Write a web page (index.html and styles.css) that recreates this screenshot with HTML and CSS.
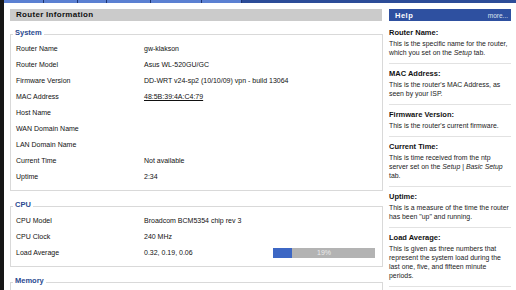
FILE: index.html
```html
<!DOCTYPE html>
<html lang="en">
<head>
    <meta charset="UTF-8">
    <title>Router Information</title>
    <link rel="stylesheet" href="styles.css">
</head>
<body>
    <div class="page">
        <div class="tabs">
            <span class="tab"></span>
            <span class="tab"></span>
            <span class="tab"></span>
            <span class="tab"></span>
            <span class="tab"></span>
            <span class="tab"></span>
        </div>

        <div class="layout">
            <div class="main">
                <h2 class="title-bar">Router Information</h2>

                <fieldset>
                    <legend>System</legend>
                    <div class="row"><span>Router Name</span><span>gw-klakson</span></div>
                    <div class="row"><span>Router Model</span><span>Asus WL-520GU/GC</span></div>
                    <div class="row"><span>Firmware Version</span><span>DD-WRT v24-sp2 (10/10/09) vpn - build 13064</span></div>
                    <div class="row"><span>MAC Address</span><span class="mac">48:5B:39:4A:C4:79</span></div>
                    <div class="row"><span>Host Name</span><span></span></div>
                    <div class="row"><span>WAN Domain Name</span><span></span></div>
                    <div class="row"><span>LAN Domain Name</span><span></span></div>
                    <div class="row"><span>Current Time</span><span>Not available</span></div>
                    <div class="row"><span>Uptime</span><span>2:34</span></div>
                </fieldset>

                <fieldset>
                    <legend>CPU</legend>
                    <div class="row"><span>CPU Model</span><span>Broadcom BCM5354 chip rev 3</span></div>
                    <div class="row"><span>CPU Clock</span><span>240 MHz</span></div>
                    <div class="row">
                        <span>Load Average</span>
                        <span class="load">
                            <span class="load-num">0.32, 0.19, 0.06</span>
                            <span class="meter">
                                <span class="meter-fill" style="width: 19%"></span>
                                <span class="meter-text">19%</span>
                            </span>
                        </span>
                    </div>
                </fieldset>

                <fieldset>
                    <legend>Memory</legend>
                    <div class="row"><span>Total Available</span><span>13.6 MB / 16.0 MB</span></div>
                    <div class="row"><span>Free</span><span>3.5 MB / 13.6 MB</span></div>
                </fieldset>
            </div>

            <div class="help">
                <div class="help-bar">
                    <b>Help</b>
                    <a href="#" class="more">more...</a>
                </div>

                <div class="help-item">
                    <h4>Router Name:</h4>
                    <p>This is the specific name for the router, which you set on the <em>Setup</em> tab.</p>
                </div>
                <div class="help-item">
                    <h4>MAC Address:</h4>
                    <p>This is the router's MAC Address, as seen by your ISP.</p>
                </div>
                <div class="help-item">
                    <h4>Firmware Version:</h4>
                    <p>This is the router's current firmware.</p>
                </div>
                <div class="help-item">
                    <h4>Current Time:</h4>
                    <p>This is time received from the ntp server set on the <em>Setup</em> | <em>Basic Setup</em> tab.</p>
                </div>
                <div class="help-item">
                    <h4>Uptime:</h4>
                    <p>This is a measure of the time the router has been "up" and running.</p>
                </div>
                <div class="help-item">
                    <h4>Load Average:</h4>
                    <p>This is given as three numbers that represent the system load during the last one, five, and fifteen minute periods.</p>
                </div>
            </div>
        </div>
    </div>
</body>
</html>
```

FILE: styles.css
```css
html, body {
    margin: 0;
    padding: 0;
    overflow: hidden;
    background-color: #fff;
    font-family: "Liberation Sans", Arial, sans-serif;
    color: #111;
}

.page {
    height: 290px;
    overflow: hidden;
    border-left: 4px solid #161616;
}

/* Reste der Menüleiste oben */
.tabs {
    display: flex;
    height: 3px;
    background-color: #2c4c98;
}

.tab {
    background-color: #5b80d2;
    border-right: 1px solid #1d3470;
}

.tab:nth-child(1) { width: 39px; }
.tab:nth-child(2) { width: 33px; }
.tab:nth-child(3) { width: 28px; }
.tab:nth-child(4) { width: 43px; }
.tab:nth-child(5) { width: 50px; }
.tab:nth-child(6) { width: 39px; }

.layout {
    display: flex;
    gap: 6px;
    padding: 6px 0 0 6px;
}

.main {
    width: 373px;
}

.title-bar {
    margin: 0 1px 0 0;
    height: 12px;
    line-height: 12px;
    padding-left: 6px;
    background-color: #cbcbcb;
    font-size: 8px;
    font-weight: bold;
    letter-spacing: 0.3px;
}

fieldset {
    margin: 7px 0 0;
    padding: 0 5px 5px;
    border: 1px solid #d9d9d9;
}

fieldset + fieldset {
    margin-top: 9px;
}

legend {
    margin-left: -3px;
    padding: 0 2px 3px;
    font-size: 7.5px;
    line-height: 10px;
    font-weight: bold;
    color: #2a4a90;
}

.row {
    display: grid;
    grid-template-columns: 128px 1fr;
    height: 16px;
    line-height: 16px;
    font-size: 7px;
}

.mac {
    text-decoration: underline;
}

.load {
    display: flex;
    align-items: center;
}

.load-num {
    width: 129px;
}

.meter {
    position: relative;
    width: 102px;
    height: 10px;
    background-color: #b3b3b3;
}

.meter-fill {
    display: block;
    height: 100%;
    background-color: #3d67c4;
}

.meter-text {
    position: absolute;
    top: 0;
    left: 0;
    width: 100%;
    line-height: 10px;
    text-align: center;
    color: #ececec;
}

/* Hilfe rechts */
.help {
    width: 122px;
}

.help-bar {
    display: flex;
    justify-content: space-between;
    align-items: center;
    height: 12px;
    padding: 0 3px 0 6px;
    background-color: #2e50a0;
    color: #fff;
}

.help-bar b {
    font-size: 7.5px;
    letter-spacing: 0.5px;
}

.more {
    font-size: 6.5px;
    color: #dfe4f0;
    text-decoration: none;
}

.help-item {
    padding: 4px 0 6px;
    border-bottom: 1px solid #e2e2e2;
}

.help-bar + .help-item {
    margin-top: 2px;
}

.help-item h4 {
    margin: 0;
    font-size: 7.5px;
    line-height: 12px;
}

.help-item p {
    margin: 0;
    font-size: 6.9px;
    line-height: 9px;
    color: #222;
}
```
